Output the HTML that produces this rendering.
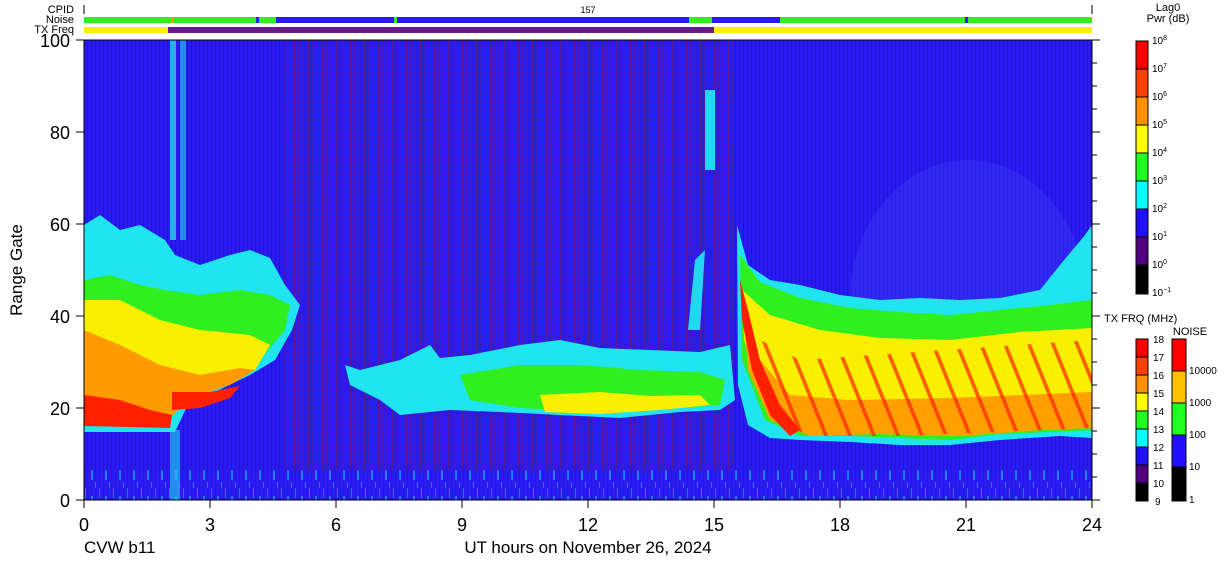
<!DOCTYPE html>
<html><head><meta charset="utf-8"><style>
html,body{margin:0;padding:0;background:#fff;width:1228px;height:567px;overflow:hidden}
svg{display:block}
text{font-family:"Liberation Sans",sans-serif;fill:#000}
</style></head><body>
<svg width="1228" height="567" viewBox="0 0 1228 567" xmlns="http://www.w3.org/2000/svg">
<defs>
<pattern id="vs" width="4" height="8" patternUnits="userSpaceOnUse"><rect width="4" height="8" fill="#2a1cf0"/><rect x="3" width="1" height="8" fill="#2210d8"/></pattern>
<pattern id="hatch" width="7" height="9" patternUnits="userSpaceOnUse"><rect width="7" height="9" fill="#2c1ae8"/><rect x="0" width="1" height="9" fill="#701a70" opacity="0.7"/><rect x="4" y="0" width="1" height="5" fill="#701a70" opacity="0.5"/></pattern>
<pattern id="speck" width="14" height="30" patternUnits="userSpaceOnUse"><rect width="14" height="30" fill="#2a1cf0"/><rect x="1" y="8" width="1" height="10" fill="#22d8f0"/><rect x="7" y="16" width="2" height="14" fill="#20e0f0"/><rect x="11" y="2" width="1" height="6" fill="#30f030"/></pattern>
<pattern id="streak" width="24" height="120" patternUnits="userSpaceOnUse" patternTransform="skewX(22)"><rect x="0" width="4" height="120" fill="#ff2000"/></pattern>
</defs>
<rect x="84" y="40" width="1008" height="460" fill="url(#vs)"/>
<rect x="281" y="40" width="454" height="430" fill="url(#hatch)"/>
<ellipse cx="968" cy="300" rx="118" ry="140" fill="#3a38f4" opacity="0.45"/>
<rect x="84" y="470" width="1008" height="30" fill="url(#speck)" opacity="0.5"/>
<!-- left region -->
<polygon fill="#20e4f0" points="84,225 100,215 120,230 140,225 165,240 175,255 200,265 230,255 250,250 270,258 285,285 300,305 292,330 275,360 250,375 215,392 190,400 175,432 84,432"/>
<polygon fill="#30ee20" points="84,280 110,275 140,285 165,290 200,295 240,290 270,295 290,305 285,330 260,360 225,380 190,392 170,420 84,422"/>
<polygon fill="#f8f000" points="84,300 120,300 160,320 200,330 250,335 270,345 255,370 220,385 180,395 170,415 84,415"/>
<polygon fill="#ff9a00" points="84,330 120,345 160,365 200,375 240,368 255,370 230,385 190,398 172,416 84,415"/>
<polygon fill="#ff2000" points="84,395 120,400 150,410 172,415 170,428 84,426"/>
<polygon fill="#ff2000" points="172,392 210,392 240,386 230,398 200,408 172,410"/>
<rect x="170" y="40" width="6" height="200" fill="#22d8f0" opacity="0.8"/>
<rect x="180" y="40" width="6" height="200" fill="#22d8f0" opacity="0.6"/>
<rect x="170" y="430" width="10" height="70" fill="#22d8f0" opacity="0.6"/>
<!-- middle region -->
<polygon fill="#20e4f0" points="345,365 360,370 400,360 430,345 440,358 470,355 520,345 560,340 600,348 650,350 700,352 730,345 735,400 720,410 680,412 620,418 560,415 500,412 450,410 400,415 380,400 350,385"/>
<polygon fill="#30ee20" points="460,375 520,365 580,365 640,370 700,372 725,380 720,405 680,408 600,412 520,408 470,400"/>
<polygon fill="#f8f000" points="540,395 600,392 650,396 700,395 710,405 660,410 600,414 545,412"/>
<rect x="705" y="90" width="10" height="80" fill="#22d8f0"/>
<polygon fill="#22d8f0" points="688,330 695,260 705,250 700,330"/>
<!-- right region -->
<polygon fill="#20e4f0" points="737,225 748,265 770,280 800,285 840,295 880,300 920,298 960,300 1000,298 1040,290 1060,265 1085,235 1092,225 1092,438 1060,436 1000,440 950,445 900,445 850,442 800,440 770,438 748,425 738,385"/>
<polygon fill="#30ee20" points="740,255 760,282 800,298 850,308 900,312 950,315 1000,310 1050,305 1092,300 1092,430 1050,432 1000,434 950,440 900,438 850,436 800,436 765,420 742,360"/>
<polygon fill="#f8f000" points="742,290 770,315 820,330 880,338 950,340 1020,332 1092,328 1092,428 1040,430 960,436 880,434 810,434 768,410 744,340"/>
<polygon fill="#ffa000" points="744,320 760,360 790,395 850,400 950,398 1092,392 1092,428 1040,430 960,436 880,434 810,436 770,420 748,370"/>
<polygon fill="url(#streak)" points="760,340 800,360 1092,340 1092,428 1000,432 900,436 810,436 775,420" opacity="0.7"/>
<polygon fill="#ff2000" points="740,280 748,310 760,360 780,405 800,430 790,436 770,415 752,370 742,320"/>
<!-- axes -->
<rect x="84" y="40" width="1008" height="460" fill="none" stroke="#000" stroke-width="1"/>
<g stroke="#000" stroke-width="1">
<line x1="76" y1="40" x2="84" y2="40"/><line x1="76" y1="132" x2="84" y2="132"/><line x1="76" y1="224" x2="84" y2="224"/><line x1="76" y1="316" x2="84" y2="316"/><line x1="76" y1="408" x2="84" y2="408"/><line x1="76" y1="500" x2="84" y2="500"/>
<line x1="1092" y1="40" x2="1100" y2="40"/><line x1="1092" y1="132" x2="1100" y2="132"/><line x1="1092" y1="224" x2="1100" y2="224"/><line x1="1092" y1="316" x2="1100" y2="316"/><line x1="1092" y1="408" x2="1100" y2="408"/><line x1="1092" y1="500" x2="1100" y2="500"/>
<line x1="1092" y1="63" x2="1097" y2="63"/><line x1="1092" y1="86" x2="1097" y2="86"/><line x1="1092" y1="109" x2="1097" y2="109"/><line x1="1092" y1="155" x2="1097" y2="155"/><line x1="1092" y1="178" x2="1097" y2="178"/><line x1="1092" y1="201" x2="1097" y2="201"/><line x1="1092" y1="247" x2="1097" y2="247"/><line x1="1092" y1="270" x2="1097" y2="270"/><line x1="1092" y1="293" x2="1097" y2="293"/><line x1="1092" y1="339" x2="1097" y2="339"/><line x1="1092" y1="362" x2="1097" y2="362"/><line x1="1092" y1="385" x2="1097" y2="385"/><line x1="1092" y1="431" x2="1097" y2="431"/><line x1="1092" y1="454" x2="1097" y2="454"/><line x1="1092" y1="477" x2="1097" y2="477"/>
<line x1="84" y1="500" x2="84" y2="508"/><line x1="210" y1="500" x2="210" y2="508"/><line x1="336" y1="500" x2="336" y2="508"/><line x1="462" y1="500" x2="462" y2="508"/><line x1="588" y1="500" x2="588" y2="508"/><line x1="714" y1="500" x2="714" y2="508"/><line x1="840" y1="500" x2="840" y2="508"/><line x1="966" y1="500" x2="966" y2="508"/><line x1="1092" y1="500" x2="1092" y2="508"/>
<line x1="84" y1="5" x2="84" y2="14"/><line x1="1092" y1="5" x2="1092" y2="14"/>
</g>
<g font-size="18" text-anchor="end">
<text x="70" y="47">100</text><text x="70" y="139">80</text><text x="70" y="231">60</text><text x="70" y="323">40</text><text x="70" y="415">20</text><text x="70" y="507">0</text>
</g>
<g font-size="18" text-anchor="middle">
<text x="84" y="531">0</text><text x="210" y="531">3</text><text x="336" y="531">6</text><text x="462" y="531">9</text><text x="588" y="531">12</text><text x="714" y="531">15</text><text x="840" y="531">18</text><text x="966" y="531">21</text><text x="1092" y="531">24</text>
</g>
<text x="84" y="553" font-size="17">CVW b11</text>
<text x="588" y="553" font-size="17" text-anchor="middle">UT hours on November 26, 2024</text>
<text x="22" y="270" font-size="17" text-anchor="middle" transform="rotate(-90 22 270)">Range Gate</text>
<g font-size="11" text-anchor="end"><text x="74" y="13">CPID</text><text x="74" y="23">Noise</text><text x="74" y="33">TX Freq</text></g>
<text x="588" y="13" font-size="9" text-anchor="middle">157</text>
<rect x="84" y="17" width="1008" height="6" fill="#30ee20"/>
<rect x="276" y="17" width="118" height="6" fill="#2a1cf0"/><rect x="397" y="17" width="292" height="6" fill="#2a1cf0"/><rect x="712" y="17" width="68" height="6" fill="#2a1cf0"/><rect x="965" y="17" width="3" height="6" fill="#2a1cf0"/><rect x="256" y="17" width="3" height="6" fill="#2a1cf0"/><rect x="171" y="17" width="2" height="6" fill="#f0a000"/>
<rect x="84" y="27" width="1008" height="6" fill="#f8f000"/><rect x="168" y="27" width="546" height="6" fill="#6a1a88"/>
<text x="1168" y="11" font-size="11" text-anchor="middle">Lag0</text>
<text x="1168" y="22" font-size="11" text-anchor="middle">Pwr (dB)</text>
<g stroke="#000" stroke-width="1">
<rect x="1136" y="41" width="12" height="28" fill="#ff0000"/><rect x="1136" y="69" width="12" height="28" fill="#ff4000"/><rect x="1136" y="97" width="12" height="28" fill="#ff9000"/><rect x="1136" y="125" width="12" height="28" fill="#ffff00"/><rect x="1136" y="153" width="12" height="28" fill="#20ff20"/><rect x="1136" y="181" width="12" height="28" fill="#00ffff"/><rect x="1136" y="209" width="12" height="28" fill="#2010ff"/><rect x="1136" y="237" width="12" height="28" fill="#500080"/><rect x="1136" y="265" width="12" height="29" fill="#000"/>
</g>
<g font-size="10"><text x="1152" y="44">10<tspan font-size="7" dy="-4">8</tspan></text><text x="1152" y="72">10<tspan font-size="7" dy="-4">7</tspan></text><text x="1152" y="100">10<tspan font-size="7" dy="-4">6</tspan></text><text x="1152" y="128">10<tspan font-size="7" dy="-4">5</tspan></text><text x="1152" y="156">10<tspan font-size="7" dy="-4">4</tspan></text><text x="1152" y="184">10<tspan font-size="7" dy="-4">3</tspan></text><text x="1152" y="212">10<tspan font-size="7" dy="-4">2</tspan></text><text x="1152" y="240">10<tspan font-size="7" dy="-4">1</tspan></text><text x="1152" y="268">10<tspan font-size="7" dy="-4">0</tspan></text><text x="1152" y="296">10<tspan font-size="7" dy="-4">−1</tspan></text></g>
<text x="1104" y="322" font-size="11">TX FRQ (MHz)</text>
<text x="1190" y="335" font-size="11" text-anchor="middle">NOISE</text>
<g stroke="#000" stroke-width="1">
<rect x="1136" y="339" width="12" height="18" fill="#ff0000"/><rect x="1136" y="357" width="12" height="18" fill="#ff4000"/><rect x="1136" y="375" width="12" height="18" fill="#ff9000"/><rect x="1136" y="393" width="12" height="18" fill="#ffff00"/><rect x="1136" y="411" width="12" height="18" fill="#20ff20"/><rect x="1136" y="429" width="12" height="18" fill="#00ffff"/><rect x="1136" y="447" width="12" height="18" fill="#2010ff"/><rect x="1136" y="465" width="12" height="18" fill="#500080"/><rect x="1136" y="483" width="12" height="18" fill="#000"/>
<rect x="1172" y="339" width="14" height="32" fill="#ff0000"/><rect x="1172" y="371" width="14" height="32" fill="#ffc000"/><rect x="1172" y="403" width="14" height="32" fill="#20ff20"/><rect x="1172" y="435" width="14" height="32" fill="#2010ff"/><rect x="1172" y="467" width="14" height="34" fill="#000"/>
</g>
<g font-size="10"><text x="1153" y="343">18</text><text x="1153" y="361">17</text><text x="1153" y="379">16</text><text x="1153" y="397">15</text><text x="1153" y="415">14</text><text x="1153" y="433">13</text><text x="1153" y="451">12</text><text x="1153" y="469">11</text><text x="1153" y="487">10</text><text x="1155" y="505">9</text>
<text x="1189" y="374">10000</text><text x="1189" y="406">1000</text><text x="1189" y="438">100</text><text x="1189" y="470">10</text><text x="1189" y="503">1</text></g>
</svg>
</body></html>
